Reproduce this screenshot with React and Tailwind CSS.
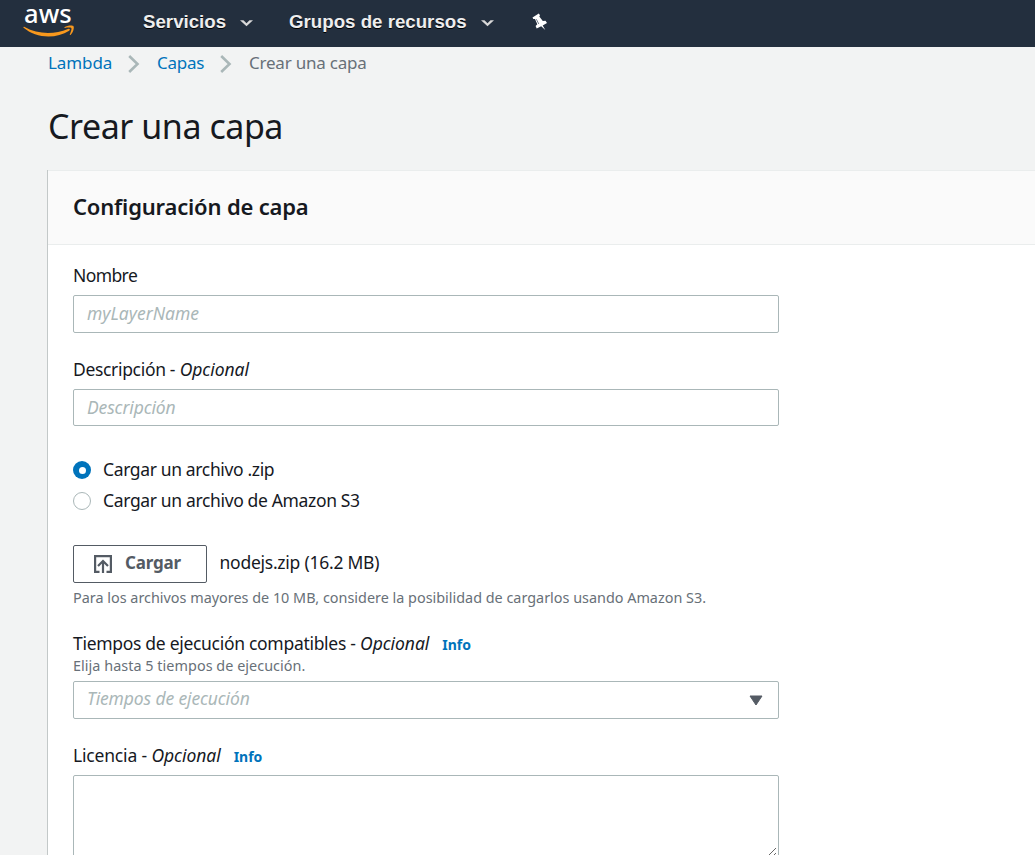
import React from "react";

function NavChevron() {
  return (
    <svg width="13" height="8" viewBox="0 0 12 7" className="mt-[3px]" fill="none">
      <path d="M0 1H3.200L6 3.700L8.800 1H12L6 6.600Z" fill="#d8d8d8" />
    </svg>
  );
}

function AwsLogo() {
  return (
    <div className="flex h-[47px] w-[52px] flex-col">
      <span className="h-[25px] pl-[1px] font-['Noto_Sans',sans-serif] text-[25.5px] leading-[27px] font-medium tracking-[0.1px] text-white">
        aws
      </span>
      <svg width="52" height="13" viewBox="0 0 52 13">
        <path d="M0.3 2.600C0.1 2 .9 1.500 1.600 2C15 9.500 31 9.700 45 4C46.600 3.300 47.600 4.600 46.200 5.700C33 14.200 13 13.600 0.300 2.600Z" fill="#f8981d" />
        <path d="M41.600 2.200C43.600 .6 49.500 0 50.500 1.200C51.500 2.500 50 8 47.500 9.900C47 10.200 46.600 10 46.800 9.500C47.600 7.700 49 4 48.300 3.100C47.600 2.300 43.800 2.700 42 2.900C41.400 3 41.200 2.600 41.600 2.200Z" fill="#f8981d" />
      </svg>
    </div>
  );
}

function CrumbChevron() {
  return (
    <svg width="12" height="20" viewBox="0 0 12 20" fill="none">
      <path d="M1.200 2L9.500 10L1.200 18" stroke="#aab7b8" strokeWidth="2.600" />
    </svg>
  );
}

function Label({ children, optional, info, className }) {
  return (
    <div className={"flex h-6 items-center whitespace-pre text-[17.5px] leading-6 " + className}>
      <span className="-mt-[2px]">{children}</span>
      {optional && <span className="-mt-[2px] italic tracking-[-0.05px]"> Opcional</span>}
      {info && <a className="ml-[13px] mt-[2px] text-[14px] font-bold tracking-normal text-[#0073bb]">Info</a>}
    </div>
  );
}

export default function App() {
  return (
    <div className="h-[855px] w-[1035px] overflow-hidden bg-[#f2f3f3] font-['Noto_Sans',sans-serif] text-[#16191f]">
      <header className="flex h-[47px] items-center bg-[#232f3e] pl-[23px] font-['Liberation_Sans',sans-serif] text-[18.7px] font-bold text-[#eeeeee]">
        <AwsLogo />
        <nav className="flex h-[42px] items-center self-start [text-shadow:0_1px_0_#000]">
          <span className="ml-[68px] mt-[2px] w-[83px]">Servicios</span>
          <span className="ml-[14px] w-[13px]"><NavChevron /></span>
          <span className="ml-[36px] mt-[2px] w-[178px] whitespace-nowrap">Grupos de recursos</span>
          <span className="ml-[14px] w-[13px]"><NavChevron /></span>
        </nav>
        <svg className="ml-[38px] mt-[-4px]" width="16" height="18" viewBox="0 0 16 18">
          <path d="M0.500 4.500L6.800 0.500L8 2.200L7.300 3.400L10.800 8L13.500 7.800L15 10L10.700 12.500L13.300 17L9.200 13.300L4.700 15.500L3.600 13L5.300 11.200L3 6L1.300 6Z" fill="#fff" />
          <path d="M4.300 6.200L6.800 11" stroke="#536070" strokeWidth="0.800" />
        </svg>
      </header>

      <div className="flex h-[33px] items-center pl-12 text-[17px] leading-6">
        <a className="mt-[-2px] w-[64px] tracking-[-0.1px] text-[#0073bb]">Lambda</a>
        <span className="ml-[16px]"><CrumbChevron /></span>
        <a className="ml-[17px] mt-[-2px] w-[48px] tracking-[-0.25px] text-[#0073bb]">Capas</a>
        <span className="ml-[15px]"><CrumbChevron /></span>
        <span className="ml-[17px] mt-[-2px] whitespace-nowrap tracking-[-0.22px] text-[#687078]">Crear una capa</span>
      </div>

      <h1 className="mt-[22px] pl-12 text-[34px] leading-[48px] tracking-[-0.45px]">Crear una capa</h1>

      <section className="ml-[47px] mt-[20px] h-[700px] border-l border-[#c3c8c8] bg-white">
        <div className="flex h-[75px] items-center border-y border-[#eaeded] bg-[#fafafa] pl-[25px]">
          <h2 className="mt-[-4px] text-[22px] leading-8 font-semibold tracking-[-0.18px]">Configuración de capa</h2>
        </div>
        <form className="w-[731px] pl-[25px]">
          <Label className="mt-[19px] tracking-[-0.6px]">Nombre</Label>
          <div className="mt-[7px] flex h-[38px] items-center rounded-[2px] border border-[#aab7b8] pl-[13px] text-[17.5px] italic text-[#aab7b8]">
            <span className="-mt-[2px]">myLayerName</span>
          </div>
          <Label className="mt-[25px] tracking-[-0.33px]" optional>Descripción -</Label>
          <div className="mt-[7px] flex h-[37px] items-center rounded-[2px] border border-[#aab7b8] pl-[13px] text-[17.5px] tracking-[-0.12px] italic text-[#aab7b8]">
            Descripción
          </div>
          <div className="mt-[32px] flex h-6 items-center text-[17.5px] tracking-[-0.36px]">
            <span className="flex h-[18px] w-[18px] items-center justify-center rounded-full bg-[#0073bb]">
              <span className="h-[7px] w-[7px] rounded-full bg-white" />
            </span>
            <span className="-mt-[2px] ml-[12px]">Cargar un archivo .zip</span>
          </div>
          <div className="mt-[7px] flex h-6 items-center text-[17.5px] tracking-[-0.35px]">
            <span className="h-[18px] w-[18px] rounded-full border border-[#aab7b8] bg-white" />
            <span className="-mt-[2px] ml-[12px]">Cargar un archivo de Amazon S3</span>
          </div>
          <div className="mt-[32px] flex h-[38px] items-center">
            <div className="flex h-[38px] w-[134px] items-center rounded-[2px] border border-[#545b64] pl-[20px] text-[17px] font-bold text-[#545b64]">
              <svg width="18" height="18" viewBox="0 0 18 18" fill="none" stroke="#545b64" strokeWidth="2.2">
                <path d="M5.500 16.900H1.100V1.100H16.900V16.900H12.500M9 18V6.500M4 11L9 6L14 11" />
              </svg>
              <span className="ml-[13px] mt-[-2px] tracking-[-0.2px]">Cargar</span>
            </div>
            <span className="ml-[12.5px] mt-[-4px] text-[17.5px] tracking-[-0.25px]">nodejs.zip (16.2 MB)</span>
          </div>
          <p className="mt-[5px] whitespace-nowrap text-[14.4px] leading-5 text-[#687078]">
            Para los archivos mayores de 10 MB, considere la posibilidad de cargarlos usando Amazon S3.
          </p>
          <Label className="mt-[24px] tracking-[-0.3px]" optional info>Tiempos de ejecución compatibles -</Label>
          <p className="text-[14.4px] leading-5 tracking-[0.04px] text-[#687078]">Elija hasta 5 tiempos de ejecución.</p>
          <div className="mt-[5px] flex h-[38px] items-center justify-between rounded-[2px] border border-[#aab7b8] pl-[13px] pr-[15px] text-[17.5px] tracking-[-0.13px] italic text-[#aab7b8]">
            <span className="mt-[-3px]">Tiempos de ejecución</span>
            <svg width="14" height="11" viewBox="0 0 14 11">
              <path d="M1 1H13L7 10Z" fill="#545b64" stroke="#545b64" strokeLinejoin="round" />
            </svg>
          </div>
          <Label className="mt-[25px] tracking-[-0.18px]" optional info>Licencia -</Label>
          <div className="mt-[7px] flex h-[82px] items-end justify-end rounded-[2px] border border-[#aab7b8]">
            <svg width="10" height="10" viewBox="0 0 10 10" fill="none" stroke="#555" strokeWidth="0.900">
              <path d="M1 9L8 2M6 9L8 7" />
            </svg>
          </div>
        </form>
      </section>
    </div>
  );
}
